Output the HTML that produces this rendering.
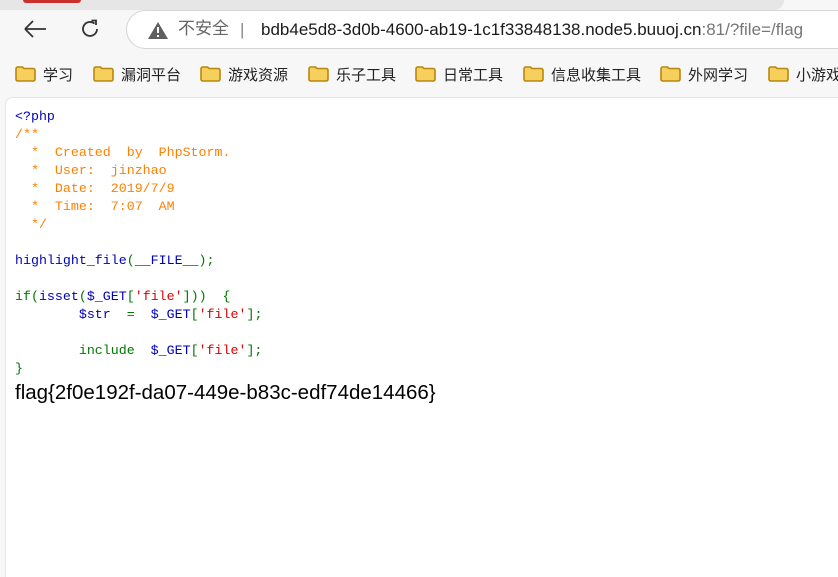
<!DOCTYPE html>
<html><head><meta charset="utf-8"><style>
*{margin:0;padding:0;box-sizing:border-box}
body{width:838px;height:573px;overflow:hidden;background:#f7f7f7;font-family:"Liberation Sans","Noto Sans CJK SC",sans-serif;position:relative}
.tabbar{position:absolute;left:0;top:0;width:784px;height:10px;background:#e6e6e6;border-radius:0 0 10px 0}
.redtab{position:absolute;left:23px;top:0;width:58px;height:3px;background:#c9302c;border-radius:0 0 3px 3px}
.addr{position:absolute;left:126px;top:10px;width:740px;height:39px;background:#fff;border:1px solid #d5d5d5;border-radius:20px}
.addr .t{position:absolute;top:9px;font-size:17px;white-space:nowrap;line-height:20px}
.bm{position:absolute;top:64px;height:20px;font-size:15px;color:#222;white-space:nowrap;display:flex;align-items:center}
.fold{width:21px;height:16px;margin-right:7px}
.page{position:absolute;left:5px;top:97px;width:840px;height:480px;background:#fff;border-radius:8px 0 0 0;border-left:1px solid #e5e5e5;border-top:1px solid #e5e5e5}
pre{position:absolute;left:15px;top:108px;font-family:"Liberation Mono",monospace;font-size:13.3px;line-height:18px;color:#0000BB;tab-size:8}
.o{color:#FF8000}.g{color:#007700}.r{color:#DD0000}.b{color:#0000BB}
.flag{position:absolute;left:15px;top:381px;font-size:20.5px;color:#000}
</style></head><body>
<div class="tabbar"></div><div class="redtab"></div>
<svg style="position:absolute;left:22px;top:18px" width="26" height="22" viewBox="0 0 26 22"><path d="M3 11H24M3 11L11 3M3 11L11 19" stroke="#333" stroke-width="1.8" fill="none"/></svg>
<svg style="position:absolute;left:78px;top:17px" width="24" height="24" viewBox="0 0 24 24"><path d="M19 12A7 7 0 1 1 16.5 6.6" stroke="#333" stroke-width="1.8" fill="none"/><path d="M13.5 3.5L18 3.5L18 8" stroke="#333" stroke-width="1.8" fill="none"/></svg>
<div class="addr">
<svg style="position:absolute;left:20px;top:10px" width="22" height="19" viewBox="0 0 22 19"><path d="M11 1L21 18H1Z" fill="#5f5f5f"/><rect x="10" y="6" width="2" height="6" fill="#fff"/><rect x="10" y="14" width="2" height="2" fill="#fff"/></svg>
<span class="t" style="left:51px;top:8px;color:#666">不安全</span>
<span class="t" style="left:113px;color:#888">|</span>
<span class="t" style="left:134px;color:#1a1a1a">bdb4e5d8-3d0b-4600-ab19-1c1f33848138.node5.buuoj.cn<span style="color:#777">:81/?file=/flag</span></span>
</div>
<div class="page"></div>
<pre><span class="b">&lt;?php</span>
<span class="o">/**
  *  Created  by  PhpStorm.
  *  User:  jinzhao
  *  Date:  2019/7/9
  *  Time:  7:07  AM
  */</span>

<span class="b">highlight_file</span><span class="g">(</span><span class="b">__FILE__</span><span class="g">);</span>

<span class="g">if(</span><span class="b">isset</span><span class="g">(</span><span class="b">$_GET</span><span class="g">[</span><span class="r">'file'</span><span class="g">]))  {</span>
	<span class="b">$str  </span><span class="g">=  </span><span class="b">$_GET</span><span class="g">[</span><span class="r">'file'</span><span class="g">];</span>

	<span class="g">include  </span><span class="b">$_GET</span><span class="g">[</span><span class="r">'file'</span><span class="g">];</span>
<span class="g">}</span></pre>
<div class="flag">flag{2f0e192f-da07-449e-b83c-edf74de14466}</div>
<div class="bm" style="left:15px"><svg class="fold" viewBox="0 0 21 16"><path d="M1 3Q1 1 3 1H7.5L9 2.5H18Q20 2.5 20 4.5V13Q20 15 18 15H3Q1 15 1 13Z" fill="#f7cf5c" stroke="#b8880f" stroke-width="1.6"/></svg>学习</div>
<div class="bm" style="left:93px"><svg class="fold" viewBox="0 0 21 16"><path d="M1 3Q1 1 3 1H7.5L9 2.5H18Q20 2.5 20 4.5V13Q20 15 18 15H3Q1 15 1 13Z" fill="#f7cf5c" stroke="#b8880f" stroke-width="1.6"/></svg>漏洞平台</div>
<div class="bm" style="left:200px"><svg class="fold" viewBox="0 0 21 16"><path d="M1 3Q1 1 3 1H7.5L9 2.5H18Q20 2.5 20 4.5V13Q20 15 18 15H3Q1 15 1 13Z" fill="#f7cf5c" stroke="#b8880f" stroke-width="1.6"/></svg>游戏资源</div>
<div class="bm" style="left:308px"><svg class="fold" viewBox="0 0 21 16"><path d="M1 3Q1 1 3 1H7.5L9 2.5H18Q20 2.5 20 4.5V13Q20 15 18 15H3Q1 15 1 13Z" fill="#f7cf5c" stroke="#b8880f" stroke-width="1.6"/></svg>乐子工具</div>
<div class="bm" style="left:415px"><svg class="fold" viewBox="0 0 21 16"><path d="M1 3Q1 1 3 1H7.5L9 2.5H18Q20 2.5 20 4.5V13Q20 15 18 15H3Q1 15 1 13Z" fill="#f7cf5c" stroke="#b8880f" stroke-width="1.6"/></svg>日常工具</div>
<div class="bm" style="left:523px"><svg class="fold" viewBox="0 0 21 16"><path d="M1 3Q1 1 3 1H7.5L9 2.5H18Q20 2.5 20 4.5V13Q20 15 18 15H3Q1 15 1 13Z" fill="#f7cf5c" stroke="#b8880f" stroke-width="1.6"/></svg>信息收集工具</div>
<div class="bm" style="left:660px"><svg class="fold" viewBox="0 0 21 16"><path d="M1 3Q1 1 3 1H7.5L9 2.5H18Q20 2.5 20 4.5V13Q20 15 18 15H3Q1 15 1 13Z" fill="#f7cf5c" stroke="#b8880f" stroke-width="1.6"/></svg>外网学习</div>
<div class="bm" style="left:768px"><svg class="fold" viewBox="0 0 21 16"><path d="M1 3Q1 1 3 1H7.5L9 2.5H18Q20 2.5 20 4.5V13Q20 15 18 15H3Q1 15 1 13Z" fill="#f7cf5c" stroke="#b8880f" stroke-width="1.6"/></svg>小游戏</div>
</body></html>
